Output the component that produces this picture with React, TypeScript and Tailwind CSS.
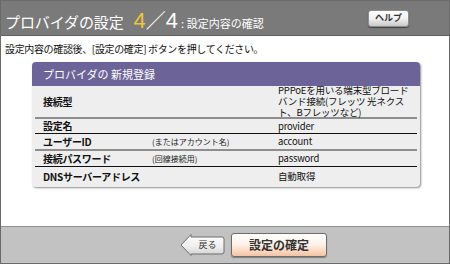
const rows = [
  {
    label: '接続型',
    sub: '',
    value: ['PPPoEを用いる端末型ブロード', 'バンド接続(フレッツ 光ネクス', 'ト、Bフレッツなど)'],
    h: 'h-[33px]',
    line: 'border-b-2 border-[#8e8e8e]',
  },
  { label: '設定名', sub: '', value: ['provider'], h: 'h-[15px]', line: 'border-b border-[#111]' },
  {
    label: 'ユーザーID',
    sub: '(またはアカウント名)',
    value: ['account'],
    h: 'h-[17px]',
    line: 'border-b-2 border-[#8e8e8e]',
  },
  { label: '接続パスワード', sub: '(回線接続用)', value: ['password'], h: 'h-[16px]', line: 'border-b border-[#111]' },
  { label: 'DNSサーバーアドレス', sub: '', value: ['自動取得'], h: 'h-[19px]', line: '' },
]

export default function App() {
  return (
    <div
      className="flex h-[264px] w-[450px] flex-col overflow-hidden border border-[#6a6a6a] bg-white text-[#111]"
      style={{ fontFamily: '"Noto Sans CJK JP", "Noto Sans", sans-serif' }}
    >
      {/* header bar */}
      <div className="flex h-[35px] shrink-0 items-center border-b border-[#5e5e5e] bg-[#7a7a7a] pl-[4px] pr-[40px] text-white">
        <div className="flex items-baseline pt-[6px]">
          <span className="text-[15px] leading-none tracking-[-0.1px]">プロバイダの設定</span>
          <span className="ml-[10px] text-[22px] leading-none text-[#f3c33b]" style={{ fontFamily: '"Liberation Sans", sans-serif' }}>
            4
          </span>
          <span className="text-[20px] leading-none">／</span>
          <span className="text-[22px] leading-none" style={{ fontFamily: '"Liberation Sans", sans-serif' }}>
            4
          </span>
          <span className="ml-[3px] text-[11px] leading-none">: 設定内容の確認</span>
        </div>
        <button className="ml-auto flex h-[17px] w-[41px] items-center justify-center rounded-[3px] border border-[#8d8d8d] bg-gradient-to-b from-white via-[#f1f1f1] to-[#c9c9c9] text-[9px] font-bold text-[#333] shadow-[0_1px_1px_rgba(0,0,0,0.45)]">
          ヘルプ
        </button>
      </div>

      {/* instruction */}
      <p className="pl-[4px] pt-[7px] text-[10px] leading-[12px] tracking-[-0.35px]">
        設定内容の確認後、[設定の確定] ボタンを押してください。
      </p>

      {/* summary card */}
      <div className="ml-[31px] mt-[7px] w-[388px] overflow-hidden rounded-[4px] bg-[#eeeeee] shadow-[1px_1px_2px_rgba(0,0,0,0.45)]">
        <div className="flex h-[24px] items-center bg-[#6c6499] pl-[11px] text-[11px] text-white">
          プロバイダの 新規登録
        </div>
        <div className="px-[3px] pb-[1px]">
          {rows.map((r) => (
            <div key={r.label} className={`flex items-center ${r.h} ${r.line}`}>
              <div className="w-[107px] shrink-0 pl-[8px] text-[10px] font-bold leading-none tracking-[-0.3px]">{r.label}</div>
              <div className="w-[136px] shrink-0 pl-[10px] text-[8px] leading-none text-[#222]">{r.sub}</div>
              <div className="flex flex-col text-[9.5px] leading-[11px] tracking-[-0.2px] whitespace-nowrap">
                {r.value.map((v) => (
                  <span key={v} className="block h-[11px]">
                    {v}
                  </span>
                ))}
              </div>
            </div>
          ))}
        </div>
      </div>

      <div className="flex-1" />

      {/* footer */}
      <div className="flex h-[37px] shrink-0 items-center gap-[6px] border-t border-[#8f8f8f] bg-[#c2c2c2] pl-[179px]">
        <button className="relative flex h-[22px] w-[45px] items-center justify-center pl-[10px] text-[9px] text-[#333]">
          <svg className="absolute inset-0" width="45" height="22" viewBox="0 0 45 22">
            <defs>
              <linearGradient id="bk" x1="0" y1="0" x2="0" y2="1">
                <stop offset="0" stopColor="#ffffff" />
                <stop offset="0.6" stopColor="#eeeeee" />
                <stop offset="1" stopColor="#cfcfcf" />
              </linearGradient>
            </defs>
            <path
              d="M1 11 L11 0.5 L11 3 L42 3 Q44 3 44 5 L44 18 Q44 20 42 20 L11 20 L11 21.5 Z"
              fill="url(#bk)"
              stroke="#6f6f6f"
              strokeWidth="1"
            />
          </svg>
          <span className="relative">戻る</span>
        </button>
        <button className="flex h-[24px] w-[96px] items-center justify-center rounded-[3px] border border-[#6c6c6c] bg-gradient-to-b from-white via-[#fdf0e6] to-[#f3c3a2] text-[12px] font-bold text-[#333] shadow-[0_1px_1px_rgba(0,0,0,0.35)]">
          設定の確定
        </button>
      </div>
    </div>
  )
}
